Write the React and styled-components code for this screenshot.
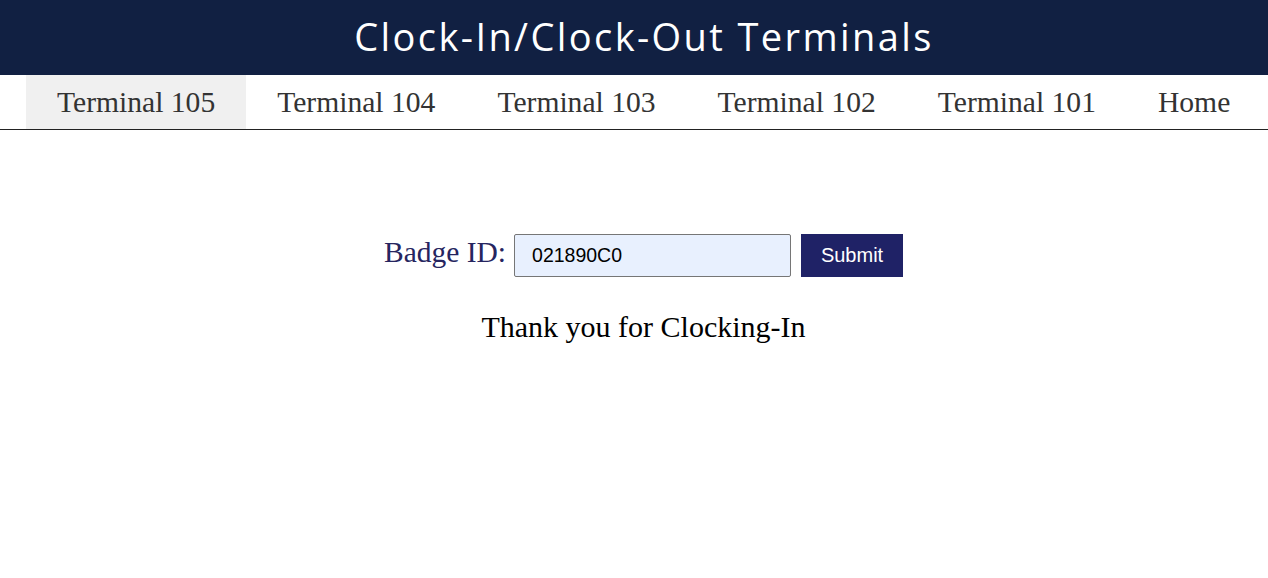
import React from "react";
import styled, { createGlobalStyle } from "styled-components";

const tabs = ["Terminal 105", "Terminal 104", "Terminal 103", "Terminal 102", "Terminal 101", "Home"];

function App() {
    return (
        <>
            <GlobalStyle />
            <Header>
                <h1>Clock-In/Clock-Out Terminals</h1>
            </Header>
            <Nav>
                {tabs.map((t, i) => <Tab key={t} active={i === 0}>{t}</Tab>)}
            </Nav>
            <Main>
                <Form>
                    <Label>Badge ID:</Label>
                    <Input defaultValue="021890C0" />
                    <Button>Submit</Button>
                </Form>
                <Message>Thank you for Clocking-In</Message>
            </Main>
        </>
    );
}

export default App;

const GlobalStyle = createGlobalStyle`
    body {
        margin: 0;
        background: #ffffff;
        font-family: "Liberation Serif", serif;
    }
`;

const Header = styled.header`
    height: 75px;
    background: #112042;
    display: flex;
    align-items: center;
    justify-content: center;

    h1 {
        margin: 0 0 4px 20px;
        color: #ffffff;
        font-family: "Open Sans", sans-serif;
        font-weight: 400;
        font-size: 38px;
        letter-spacing: 2.4px;
    }
`;

const Nav = styled.nav`
    display: flex;
    height: 54px;
    padding-left: 26px;
    border-bottom: 1px solid #222;
    overflow: hidden;
`;

const Tab = styled.div`
    display: flex;
    align-items: center;
    flex-shrink: 0;
    white-space: nowrap;
    padding: 0 31px;
    font-size: 29.6px;
    color: #333;
    background: ${p => (p.active ? "#f0f0f0" : "transparent")};
`;

const Main = styled.main`
    display: flex;
    flex-direction: column;
    align-items: center;
    padding-top: 104px;
    padding-left: 19px;
`;

const Form = styled.div`
    display: flex;
    align-items: center;
    gap: 10px;
`;

const Label = styled.label`
    font-size: 29.5px;
    color: #26255f;
    margin-top: -6px;
    margin-right: -2px;
`;

const Input = styled.input`
    box-sizing: border-box;
    width: 277px;
    height: 43px;
    padding: 0 17px;
    border: 1px solid #767676;
    border-radius: 2px;
    background: #e8f0fe;
    font-family: "Liberation Sans", Arial, sans-serif;
    font-size: 19.5px;
    color: #000;
    outline: none;
`;

const Button = styled.button`
    width: 102px;
    height: 43px;
    border: none;
    background: #1f2266;
    color: #fff;
    font-family: "Liberation Sans", Arial, sans-serif;
    font-size: 20px;
`;

const Message = styled.p`
    margin: 33px 0 0;
    font-size: 30px;
    color: #000;
`;
